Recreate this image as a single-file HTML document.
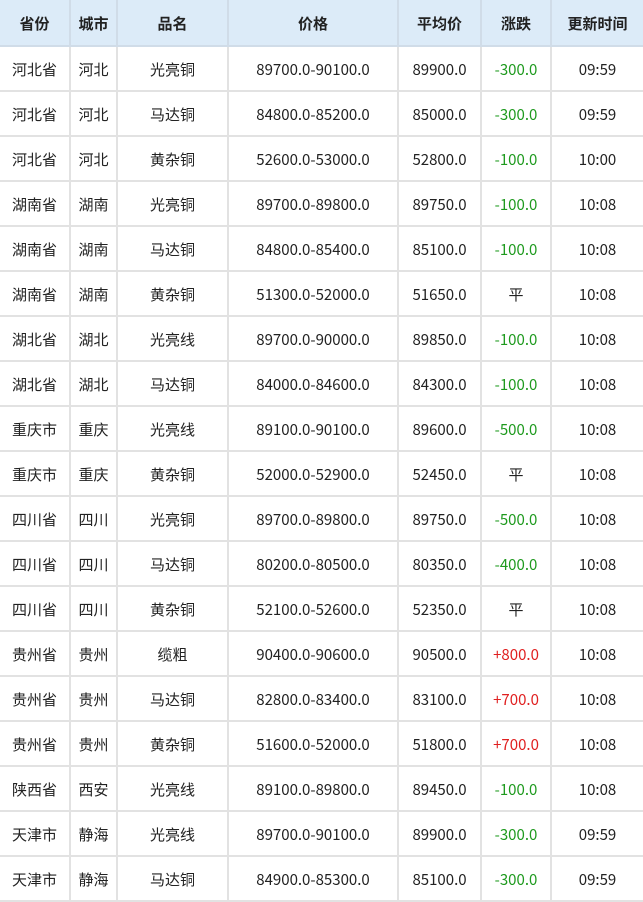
<!DOCTYPE html><html><head><meta charset="utf-8"><style>
body{margin:0;background:#fff;}
table{border-collapse:collapse;width:643px;table-layout:fixed;font-family:"Noto Sans CJK SC","Liberation Sans",sans-serif;font-size:15px;color:#222;}
td,th{height:43px;border:2px solid #e2e2e2;text-align:center;padding:3px 0 0 0;box-sizing:border-box;white-space:nowrap;line-height:20px;}
th{background:#dcebf8;font-weight:bold;border-color:#d0dce8;height:46px;}
tr:first-child th{border-top:none}
td:first-child,th:first-child{border-left:none}
td:last-child,th:last-child{border-right:none}
td{height:45px;}
.g{color:#1e9a1e}.r{color:#e02020}
</style></head><body><table>
<colgroup><col style="width:70px"><col style="width:47px"><col style="width:111px"><col style="width:170px"><col style="width:83px"><col style="width:70px"><col style="width:92px"></colgroup>
<tr><th>省份</th><th>城市</th><th>品名</th><th>价格</th><th>平均价</th><th>涨跌</th><th>更新时间</th></tr>
<tr><td>河北省</td><td>河北</td><td>光亮铜</td><td>89700.0-90100.0</td><td>89900.0</td><td class="g">-300.0</td><td>09:59</td></tr>
<tr><td>河北省</td><td>河北</td><td>马达铜</td><td>84800.0-85200.0</td><td>85000.0</td><td class="g">-300.0</td><td>09:59</td></tr>
<tr><td>河北省</td><td>河北</td><td>黄杂铜</td><td>52600.0-53000.0</td><td>52800.0</td><td class="g">-100.0</td><td>10:00</td></tr>
<tr><td>湖南省</td><td>湖南</td><td>光亮铜</td><td>89700.0-89800.0</td><td>89750.0</td><td class="g">-100.0</td><td>10:08</td></tr>
<tr><td>湖南省</td><td>湖南</td><td>马达铜</td><td>84800.0-85400.0</td><td>85100.0</td><td class="g">-100.0</td><td>10:08</td></tr>
<tr><td>湖南省</td><td>湖南</td><td>黄杂铜</td><td>51300.0-52000.0</td><td>51650.0</td><td>平</td><td>10:08</td></tr>
<tr><td>湖北省</td><td>湖北</td><td>光亮线</td><td>89700.0-90000.0</td><td>89850.0</td><td class="g">-100.0</td><td>10:08</td></tr>
<tr><td>湖北省</td><td>湖北</td><td>马达铜</td><td>84000.0-84600.0</td><td>84300.0</td><td class="g">-100.0</td><td>10:08</td></tr>
<tr><td>重庆市</td><td>重庆</td><td>光亮线</td><td>89100.0-90100.0</td><td>89600.0</td><td class="g">-500.0</td><td>10:08</td></tr>
<tr><td>重庆市</td><td>重庆</td><td>黄杂铜</td><td>52000.0-52900.0</td><td>52450.0</td><td>平</td><td>10:08</td></tr>
<tr><td>四川省</td><td>四川</td><td>光亮铜</td><td>89700.0-89800.0</td><td>89750.0</td><td class="g">-500.0</td><td>10:08</td></tr>
<tr><td>四川省</td><td>四川</td><td>马达铜</td><td>80200.0-80500.0</td><td>80350.0</td><td class="g">-400.0</td><td>10:08</td></tr>
<tr><td>四川省</td><td>四川</td><td>黄杂铜</td><td>52100.0-52600.0</td><td>52350.0</td><td>平</td><td>10:08</td></tr>
<tr><td>贵州省</td><td>贵州</td><td>缆粗</td><td>90400.0-90600.0</td><td>90500.0</td><td class="r">+800.0</td><td>10:08</td></tr>
<tr><td>贵州省</td><td>贵州</td><td>马达铜</td><td>82800.0-83400.0</td><td>83100.0</td><td class="r">+700.0</td><td>10:08</td></tr>
<tr><td>贵州省</td><td>贵州</td><td>黄杂铜</td><td>51600.0-52000.0</td><td>51800.0</td><td class="r">+700.0</td><td>10:08</td></tr>
<tr><td>陕西省</td><td>西安</td><td>光亮线</td><td>89100.0-89800.0</td><td>89450.0</td><td class="g">-100.0</td><td>10:08</td></tr>
<tr><td>天津市</td><td>静海</td><td>光亮线</td><td>89700.0-90100.0</td><td>89900.0</td><td class="g">-300.0</td><td>09:59</td></tr>
<tr><td>天津市</td><td>静海</td><td>马达铜</td><td>84900.0-85300.0</td><td>85100.0</td><td class="g">-300.0</td><td>09:59</td></tr>
</table></body></html>
